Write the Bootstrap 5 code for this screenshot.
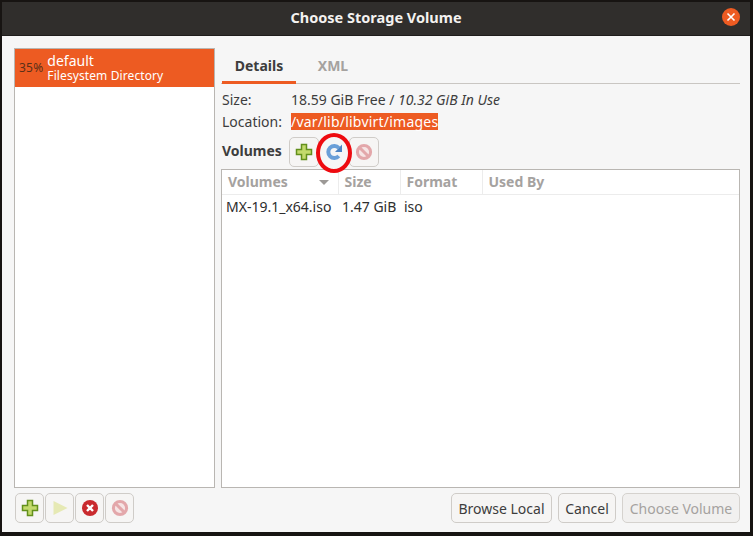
<!DOCTYPE html>
<html lang="en">
<head>
    <meta charset="UTF-8">
    <meta name="viewport" content="width=device-width, initial-scale=1.0">
    <title>Choose Storage Volume</title>
    <link href="https://cdn.jsdelivr.net/npm/bootstrap@5.3.0/dist/css/bootstrap.min.css" rel="stylesheet">
    <style>
        html, body { height: 100%; }
        body { background: #171412; font-family: "Noto Sans", sans-serif; font-size: 14px; color: #3d3d3d; overflow: hidden; line-height: 1.2; }
        .win { width: 748px; height: 530px; margin: 2px 0 0 2px; background: #f6f6f6; display: flex; flex-direction: column; }
        .titlebar { height: 34px; padding-bottom: 2px; background: #302e2c; color: #f4f2f0; font-weight: 700; font-size: 14.5px; position: relative; flex: none; border-bottom: 1px solid #1f1d1c; }
        .close-dot { position: absolute; right: 10px; top: 6px; width: 18px; height: 18px; border-radius: 50%; background: #ed5b22; display: flex; align-items: center; justify-content: center; }
        .main-area { height: 452px; padding: 12px 10px 0 12px; gap: 6px; flex: none; }
        .pool-list { width: 201px; flex: none; background: #fff; border: 1px solid #b9b6b2; border-radius: 0; }
        .pool-row { background: #ed5b22; color: #fff; height: 38px; padding: 1px 0 0 4px; border: 0; border-radius: 0; gap: 4px; }
        .pool-pct { font-size: 12px; color: #5a3018; letter-spacing: .2px; }
        .pool-name { font-size: 14px; line-height: 15px; }
        .pool-type { font-size: 12px; line-height: 16px; letter-spacing: .1px; }
        .detail-pane { width: 519px; flex: none; }
        .tab-strip { height: 36px; border-bottom: 1px solid #c9c6c2; flex: none; padding-left: 1px; gap: 0; }
        .tab-strip .nav-link { padding: 0; width: 74px; height: 36px; line-height: 35px; text-align: center; font-weight: 700; font-size: 14px; color: #a5a29f; border-radius: 0; }
        .tab-strip .nav-link.active { color: #3d3d3d; border-bottom: 3px solid #ed5b22; }
        .info-row { height: 22px; padding-left: 1px; }
        .info-row-first { margin-top: 5px; }
        .info-label { width: 69px; flex: none; }
        .path-sel { background: #ed5b22; color: #fff; display: inline-block; line-height: 17px; letter-spacing: .22px; }
        .vol-head { height: 30px; margin-top: 4px; padding-left: 1px; }
        .vol-label { width: 67px; font-weight: 700; flex: none; }
        .tool-btn, .tool-btn:disabled { width: 30px; height: 30px; padding: 0; display: flex; align-items: center; justify-content: center; background: #f6f5f4; border: 1px solid #cfccc8; border-radius: 5px; opacity: 1; }
        .tool-flat { background: transparent; border-color: transparent; }
        .ring-wrap { position: relative; }
        .red-ring { position: absolute; left: -3px; top: -4px; width: 36px; height: 40px; border: 4.5px solid #ee0b10; border-radius: 50%; pointer-events: none; }
        .vol-box { margin-top: 2px; height: 320px; background: #fff; border: 1px solid #b9b6b2; }
        .vol-table { margin: 0; width: 100%; table-layout: fixed; --bs-table-bg: transparent; }
        .vol-table th { height: 25px; padding: 0 0 0 6px; font-weight: 700; color: #a5a29f; border-bottom: 1px solid #ececec; border-right: 1px solid #ececec; font-size: 14px; vertical-align: middle; }
        .vol-table th:last-child { border-right: 0; }
        .vol-table td { height: 24px; padding: 0 0 0 4px; border: 0; color: #2e2e2e; vertical-align: middle; }
        .sort-arrow { float: right; width: 0; height: 0; margin: 6px 9px 0 0; border-left: 5px solid transparent; border-right: 5px solid transparent; border-top: 5px solid #9c9996; }
        .foot-bar { height: 30px; padding: 5px 10px 0 13px; box-sizing: content-box; flex: none; }
        .foot-actions { gap: 6px; }
        .foot-btn, .foot-btn:disabled { height: 30px; padding: 0; font-size: 14px; color: #3d3d3d; background: #f6f5f4; border: 1px solid #cfccc8; border-radius: 5px; opacity: 1; }
        .foot-btn:disabled { color: #a5a29f; background: #f1f0ef; border-color: #d5d2ce; }
        .browse-btn { width: 101px; }
        .cancel-btn { width: 58px; }
        .choose-btn { width: 118px; }
        .foot-tool { gap: 1px; }
        .foot-tool .tool-btn { width: 29px; }
    </style>
</head>
<body>
    <div class="win">
        <div class="titlebar d-flex align-items-center justify-content-center">
            Choose Storage Volume
            <span class="close-dot">
                <svg width="10" height="10" viewBox="0 0 10 10"><path d="M1.5 1.5l7 7M8.5 1.5l-7 7" stroke="#fff" stroke-width="1.6"/></svg>
            </span>
        </div>

        <div class="main-area d-flex">
            <div class="pool-list list-group">
                <div class="pool-row list-group-item d-flex align-items-center">
                    <span class="pool-pct">35%</span>
                    <div>
                        <div class="pool-name">default</div>
                        <div class="pool-type">Filesystem Directory</div>
                    </div>
                </div>
            </div>

            <div class="detail-pane d-flex flex-column">
                <div class="tab-strip nav">
                    <a class="nav-link active" href="#">Details</a>
                    <a class="nav-link" href="#">XML</a>
                </div>
                <div class="info-row info-row-first d-flex align-items-center">
                    <span class="info-label">Size:</span>
                    <span>18.59 GiB Free / <em>10.32 GiB In Use</em></span>
                </div>
                <div class="info-row d-flex align-items-center">
                    <span class="info-label">Location:</span>
                    <span class="path-sel">/var/lib/libvirt/images</span>
                </div>
                <div class="vol-head d-flex align-items-center">
                    <span class="vol-label">Volumes</span>
                    <button class="btn tool-btn" type="button">
                        <svg width="18" height="18" viewBox="0 0 18 18"><path d="M6.5 1.5h5v5h5v5h-5v5h-5v-5h-5v-5h5z" fill="#c3da6c" stroke="#63901c" stroke-width="1.5"/></svg>
                    </button>
                    <div class="ring-wrap">
                        <button class="btn tool-btn tool-flat" type="button">
                            <svg width="18" height="18" viewBox="0 0 18 18"><path d="M13.8 13a6 6 0 1 1 0-8" fill="none" stroke="#6a9fd8" stroke-width="4"/><path d="M17 1.5v7.5h-7z" fill="#4a83c4"/></svg>
                        </button>
                        <span class="red-ring"></span>
                    </div>
                    <button class="btn tool-btn" type="button" disabled>
                        <svg width="18" height="18" viewBox="0 0 18 18"><circle cx="9" cy="9" r="6.6" fill="#f6e4e4" stroke="#e3a7aa" stroke-width="3"/><path d="M4.5 4.5l9 9" stroke="#e3a7aa" stroke-width="3"/></svg>
                    </button>
                </div>
                <div class="vol-box">
                    <table class="table vol-table">
                        <colgroup>
                            <col style="width: 116px">
                            <col style="width: 62px">
                            <col style="width: 82px">
                            <col>
                        </colgroup>
                        <thead>
                            <tr>
                                <th>Volumes<span class="sort-arrow"></span></th>
                                <th>Size</th>
                                <th>Format</th>
                                <th>Used By</th>
                            </tr>
                        </thead>
                        <tbody>
                            <tr>
                                <td>MX-19.1_x64.iso</td>
                                <td>1.47 GiB</td>
                                <td>iso</td>
                                <td></td>
                            </tr>
                        </tbody>
                    </table>
                </div>
            </div>
        </div>

        <div class="foot-bar d-flex justify-content-between">
            <div class="foot-tool d-flex">
                <button class="btn tool-btn" type="button">
                    <svg width="18" height="18" viewBox="0 0 18 18"><path d="M6.5 1.5h5v5h5v5h-5v5h-5v-5h-5v-5h5z" fill="#c3da6c" stroke="#63901c" stroke-width="1.5"/></svg>
                </button>
                <button class="btn tool-btn" type="button" disabled>
                    <svg width="18" height="18" viewBox="0 0 18 18"><path d="M2.5 2l14 7-14 7z" fill="#e6e9b4"/></svg>
                </button>
                <button class="btn tool-btn" type="button">
                    <svg width="18" height="18" viewBox="0 0 18 18"><circle cx="9" cy="9" r="8" fill="#c92a2e"/><path d="M6 6l6 6M12 6l-6 6" stroke="#fff" stroke-width="2.4"/></svg>
                </button>
                <button class="btn tool-btn" type="button" disabled>
                    <svg width="18" height="18" viewBox="0 0 18 18"><circle cx="9" cy="9" r="6.6" fill="#f6e4e4" stroke="#e3a7aa" stroke-width="3"/><path d="M4.5 4.5l9 9" stroke="#e3a7aa" stroke-width="3"/></svg>
                </button>
            </div>
            <div class="foot-actions d-flex">
                <button class="btn foot-btn browse-btn" type="button">Browse Local</button>
                <button class="btn foot-btn cancel-btn" type="button">Cancel</button>
                <button class="btn foot-btn choose-btn" type="button" disabled>Choose Volume</button>
            </div>
        </div>
    </div>
    <script src="https://cdn.jsdelivr.net/npm/bootstrap@5.3.0/dist/js/bootstrap.bundle.min.js"></script>
</body>
</html>
